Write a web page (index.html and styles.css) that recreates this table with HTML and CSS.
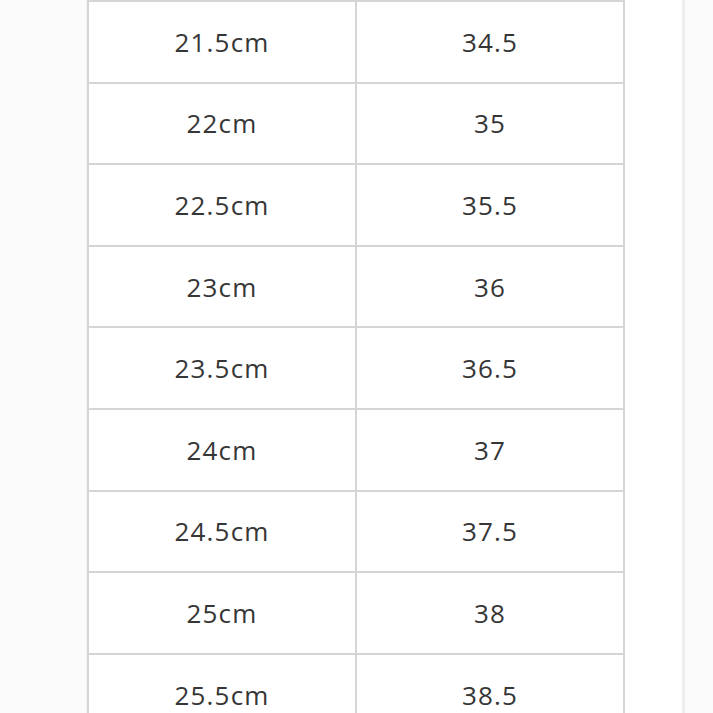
FILE: index.html
```html
<!DOCTYPE html>
<html>
<head>
<meta charset="utf-8">
<link rel="stylesheet" href="styles.css">
</head>
<body>
<div class="page">
  <div class="size-table">
    <div class="cell">21.5cm</div><div class="cell">34.5</div>
    <div class="cell">22cm</div><div class="cell">35</div>
    <div class="cell">22.5cm</div><div class="cell">35.5</div>
    <div class="cell">23cm</div><div class="cell">36</div>
    <div class="cell">23.5cm</div><div class="cell">36.5</div>
    <div class="cell">24cm</div><div class="cell">37</div>
    <div class="cell">24.5cm</div><div class="cell">37.5</div>
    <div class="cell">25cm</div><div class="cell">38</div>
    <div class="cell">25.5cm</div><div class="cell">38.5</div>
  </div>
</div>
</body>
</html>
```

FILE: styles.css
```css
html, body {
  margin: 0;
  padding: 0;
  background: #fbfbfb;
  height: 713px;
  overflow: hidden;
}
.page {
  margin-left: 86px;
  width: 595px;
  height: 713px;
  background: #ffffff;
  border-left: 1px solid #f0f0f0;
  border-right: 3px solid #eeeeee;
}
.size-table {
  display: grid;
  grid-template-columns: 268px 268px;
  grid-auto-rows: 81.6px;
  width: 538px;
  box-sizing: border-box;
  border-top: 2px solid #d5d5d5;
  border-left: 2px solid #d5d5d5;
  font-family: "Open Sans", "Noto Sans CJK JP", sans-serif;
  font-size: 26px;
  font-weight: 400;
  letter-spacing: 1.2px;
  color: #363636;
}
.size-table .cell {
  box-sizing: border-box;
  border-right: 2px solid #d5d5d5;
  border-bottom: 2px solid #d5d5d5;
  display: flex;
  align-items: center;
  justify-content: center;
}
```
